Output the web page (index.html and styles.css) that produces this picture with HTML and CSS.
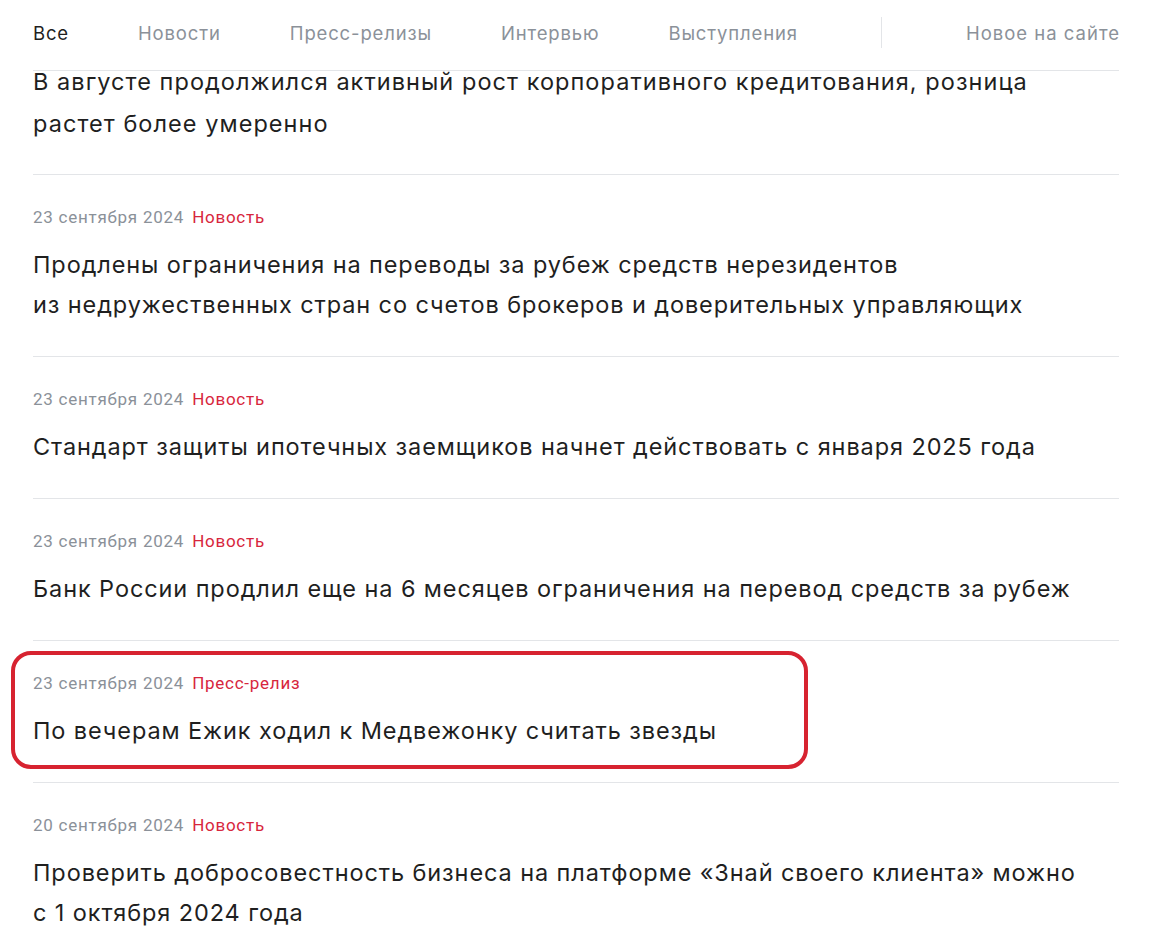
FILE: index.html
```html
<!DOCTYPE html>
<html lang="ru">
<head>
<meta charset="utf-8">
<link rel="stylesheet" href="styles.css">
</head>
<body>
<div class="page">
  <nav class="tabs">
    <div class="tabs-main">
      <span class="tab active">Все</span>
      <span class="tab">Новости</span>
      <span class="tab">Пресс-релизы</span>
      <span class="tab">Интервью</span>
      <span class="tab">Выступления</span>
    </div>
    <div class="tabs-sep"></div>
    <span class="tab tab-new">Новое на сайте</span>
  </nav>
  <ul class="list">
    <li class="item item-cut">
      <div class="title">В августе продолжился активный рост корпоративного кредитования, розница<br>растет более умеренно</div>
    </li>
    <li class="item">
      <div class="meta"><span class="date">23 сентября 2024</span><span class="cat">Новость</span></div>
      <div class="title">Продлены ограничения на переводы за рубеж средств нерезидентов<br>из недружественных стран со счетов брокеров и доверительных управляющих</div>
    </li>
    <li class="item">
      <div class="meta"><span class="date">23 сентября 2024</span><span class="cat">Новость</span></div>
      <div class="title">Стандарт защиты ипотечных заемщиков начнет действовать с января 2025 года</div>
    </li>
    <li class="item">
      <div class="meta"><span class="date">23 сентября 2024</span><span class="cat">Новость</span></div>
      <div class="title">Банк России продлил еще на 6 месяцев ограничения на перевод средств за рубеж</div>
    </li>
    <li class="item item-marked">
      <div class="meta"><span class="date">23 сентября 2024</span><span class="cat">Пресс-релиз</span></div>
      <div class="title">По вечерам Ежик ходил к Медвежонку считать звезды</div>
      <div class="mark"></div>
    </li>
    <li class="item">
      <div class="meta"><span class="date">20 сентября 2024</span><span class="cat">Новость</span></div>
      <div class="title">Проверить добросовестность бизнеса на платформе «Знай своего клиента» можно<br>с 1 октября 2024 года</div>
    </li>
  </ul>
</div>
</body>
</html>
```

FILE: styles.css
```css
* { box-sizing: border-box; }
html, body { margin: 0; padding: 0; background: #fff; }
body {
  font-family: Inter, "Noto Sans", "Liberation Sans", sans-serif;
  color: #1f1f1f;
  overflow: hidden;
  height: 950px;
}
.page {
  width: 1086px;
  margin-left: 33px;
}
.tabs {
  position: relative;
  z-index: 2;
  display: flex;
  align-items: center;
  height: 71px;
  border-bottom: 1px solid #e3e5e8;
  background: #fff;
}
.tabs-main {
  display: flex;
  gap: 69px;
  flex: 1;
}
.tab {
  font-size: 18.5px;
  letter-spacing: 0.85px;
  color: #8b9199;
  line-height: 24px;
  margin-top: -4px;
  white-space: nowrap;
}
.tab.active { color: #1f1f1f; }
.tab-new { letter-spacing: 1px; margin-right: -1px; }
.tabs-sep {
  width: 1px;
  height: 31px;
  background: #e3e5e8;
  margin-top: -6px;
  margin-right: 84px;
}
.list {
  list-style: none;
  margin: 0;
  padding: 0;
}
.item {
  position: relative;
  border-bottom: 1px solid #e3e5e8;
  padding: 30px 0 31px;
}
.item-cut {
  margin-top: -10px;
  padding-top: 0;
  padding-bottom: 29px;
}
.meta {
  display: flex;
  gap: 8px;
  font-family: "Roboto", "Liberation Sans", sans-serif;
  font-size: 17px;
  line-height: 24px;
  letter-spacing: 0.75px;
}
.date { color: #8b9199; }
.cat { color: #d7263d; }
.title {
  margin-top: 16px;
  font-size: 23.5px;
  letter-spacing: 0.9px;
  line-height: 40px;
  color: #1f1f1f;
  white-space: nowrap;
}
.item-cut .title {
  margin-top: 0;
  line-height: 42px;
  letter-spacing: 1.05px;
}
.mark {
  position: absolute;
  left: -22px;
  top: 10px;
  width: 797px;
  height: 118px;
  border: 4px solid #d72330;
  border-radius: 20px;
  pointer-events: none;
}
```
